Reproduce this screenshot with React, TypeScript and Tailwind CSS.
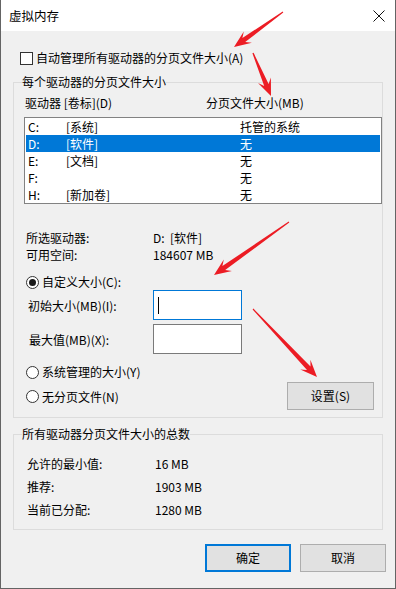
import React from 'react'

const drives = [
  { letter: 'C:', label: '[系统]', size: '托管的系统' },
  { letter: 'D:', label: '[软件]', size: '无', selected: true },
  { letter: 'E:', label: '[文档]', size: '无' },
  { letter: 'F:', label: '', size: '无' },
  { letter: 'H:', label: '[新加卷]', size: '无' },
]

// red annotation arrows: [startX, startY, tipX, tipY]
const arrows: [number, number, number, number][] = [
  [283, 12, 234, 47],
  [253, 53, 271, 96],
  [289, 222, 214, 275],
  [253, 309, 317, 377],
]

function arrowPoints(x1: number, y1: number, x2: number, y2: number) {
  const len = Math.hypot(x2 - x1, y2 - y1)
  const dx = (x2 - x1) / len
  const dy = (y2 - y1) / len
  const nx = -dy
  const ny = dx
  const L = 17
  const W = 7
  const neck = L - 5
  const pts = [
    [x1 + nx * 0.6, y1 + ny * 0.6],
    [x2 - dx * neck + nx * 2.4, y2 - dy * neck + ny * 2.4],
    [x2 - dx * L + nx * W, y2 - dy * L + ny * W],
    [x2, y2],
    [x2 - dx * L - nx * W, y2 - dy * L - ny * W],
    [x2 - dx * neck - nx * 2.4, y2 - dy * neck - ny * 2.4],
    [x1 - nx * 0.6, y1 - ny * 0.6],
  ]
  return pts.map(p => `${p[0].toFixed(1)},${p[1].toFixed(1)}`).join(' ')
}

function Radio({ checked = false }: { checked?: boolean }) {
  return (
    <span className="w-[13px] h-[13px] rounded-full border border-[#333] bg-white flex items-center justify-center shrink-0">
      {checked && <span className="w-[7px] h-[7px] rounded-full bg-[#1a1a1a]" />}
    </span>
  )
}

export default function App() {
  return (
    <div
      className="relative w-[396px] h-[589px] bg-[#f0f0f0] border-x border-b border-[#646464] text-[12px] text-black leading-[16px] overflow-hidden"
      style={{ fontFamily: '"Noto Sans CJK SC", "Noto Sans", sans-serif' }}
    >
      {/* Title bar */}
      <div className="h-[31px] bg-white flex items-center justify-between pl-[8px] pr-[9px]">
        <span className="text-[12.5px]">虚拟内存</span>
        <svg width="12" height="12" viewBox="0 0 12 12" className="mr-[1px]">
          <path d="M0.5 0.5 L11.5 11.5 M11.5 0.5 L0.5 11.5" stroke="#111" strokeWidth="1" />
        </svg>
      </div>

      <div className="px-[12px]">
        {/* Auto manage checkbox */}
        <div className="mt-[19px] h-[16px] flex items-center pl-[7px]">
          <span className="w-[13px] h-[13px] border border-[#333] bg-white shrink-0" />
          <span className="ml-[3px]">自动管理所有驱动器的分页文件大小(A)</span>
        </div>

        {/* Per drive group */}
        <fieldset className="mt-[8px] border border-[#dcdcdc] pl-[8px] pb-[7px] pt-[5px]">
          <legend className="leading-[16px]">每个驱动器的分页文件大小</legend>
          <div className="h-[16px] flex items-center pl-[3px]">
            <span className="w-[181px]">驱动器 [卷标](D)</span>
            <span>分页文件大小(MB)</span>
          </div>
          <div className="mt-[6px] ml-[2px] w-[358px] h-[87px] border border-[#828282] bg-white px-[1px]">
            {drives.map(d => (
              <div
                key={d.letter}
                className={`h-[17px] flex items-center ${d.selected ? 'bg-[#0078d7] text-white' : ''}`}
              >
                <span className="w-[40px] pl-[2px]">{d.letter}</span>
                <span className="w-[174px]">{d.label}</span>
                <span>{d.size}</span>
              </div>
            ))}
          </div>

          <div className="mt-[25px] pl-[4px]">
            <div className="h-[17px] flex items-center">
              <span className="w-[127px]">所选驱动器:</span>
              <span>D:&nbsp;&nbsp;[软件]</span>
            </div>
            <div className="h-[17px] flex items-center">
              <span className="w-[127px]">可用空间:</span>
              <span>184607 MB</span>
            </div>
          </div>

          <div className="mt-[11px] h-[16px] flex items-center pl-[4px]">
            <Radio checked />
            <span className="ml-[3px]">自定义大小(C):</span>
          </div>

          <div className="h-[30px] flex items-center pl-[6px]">
            <span className="w-[125px] pt-[2px]">初始大小(MB)(I):</span>
            <div className="w-[89px] h-[30px] border border-[#0078d7] bg-white flex items-center pl-[4px]">
              <span className="w-[1px] h-[17px] bg-black" />
            </div>
          </div>

          <div className="mt-[4px] h-[30px] flex items-center pl-[7px]">
            <span className="w-[124px] pt-[2px]">最大值(MB)(X):</span>
            <div className="w-[89px] h-[30px] border border-[#7a7a7a] bg-white" />
          </div>

          <div className="mt-[10px] h-[16px] flex items-center pl-[4px]">
            <Radio />
            <span className="ml-[3px]">系统管理的大小(Y)</span>
          </div>

          <div className="mt-[2px] h-[28px] flex items-center justify-between pl-[4px] pr-[8px]">
            <div className="flex items-center pt-[1px]">
              <Radio />
              <span className="ml-[3px]">无分页文件(N)</span>
            </div>
            <button className="w-[87px] h-[28px] bg-[#e1e1e1] border border-[#adadad] flex items-center justify-center">
              设置(S)
            </button>
          </div>
        </fieldset>

        {/* Totals group */}
        <fieldset className="mt-[8px] border border-[#dcdcdc] pl-[8px] pt-[10px] pb-[8px]">
          <legend className="leading-[16px]">所有驱动器分页文件大小的总数</legend>
          {[
            ['允许的最小值:', '16 MB'],
            ['推荐:', '1903 MB'],
            ['当前已分配:', '1280 MB'],
          ].map(([k, v]) => (
            <div key={k} className="h-[23px] flex items-center pl-[5px]">
              <span className="w-[128px]">{k}</span>
              <span>{v}</span>
            </div>
          ))}
        </fieldset>
      </div>

      {/* Dialog buttons */}
      <div className="mt-[14px] flex justify-end gap-[9px] pr-[9px]">
        <button className="w-[86px] h-[28px] bg-[#e1e1e1] border-2 border-[#0078d7] flex items-center justify-center">
          确定
        </button>
        <button className="w-[86px] h-[28px] bg-[#e1e1e1] border border-[#adadad] flex items-center justify-center">
          取消
        </button>
      </div>

      {/* Red annotation arrows */}
      <svg className="absolute left-[-1px] top-0 pointer-events-none" width="396" height="589">
        {arrows.map(([a, b, c, d], i) => (
          <polygon key={i} points={arrowPoints(a, b, c, d)} fill="#ec1c24" />
        ))}
      </svg>
    </div>
  )
}
